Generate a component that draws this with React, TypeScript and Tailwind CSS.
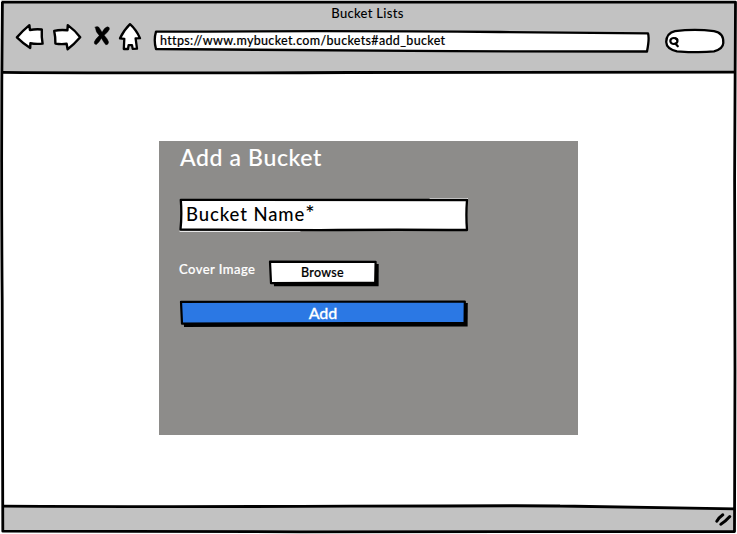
import type { ReactNode } from "react";

const ink = { fill: "none", stroke: "#000", strokeLinecap: "round", strokeLinejoin: "round" } as const;

function Sketch({ box, children }: { box: string; children: ReactNode }) {
  return (
    <svg viewBox={box} className="pointer-events-none absolute inset-0 h-full w-full" {...ink}>
      {children}
    </svg>
  );
}

function Toolbar() {
  return (
    <div className="flex h-[34px] items-start pl-[15px]">
      <svg viewBox="15 22 30 30" className="h-[30px] w-[30px]" {...ink} fill="#fff" strokeWidth="2.4">
        <path d="M16.9 37.4Q23 30.5 29.4 25.2L29.9 30Q36 28.8 41.8 29.5Q41.4 37 42.6 43.6Q36 44.2 30.4 43.3L30.2 48Q23 43.5 16.9 37.4Z" />
      </svg>
      <svg viewBox="52 22 30 30" className="ml-[7px] h-[30px] w-[30px]" {...ink} fill="#fff" strokeWidth="2.4">
        <path d="M54.2 30.9Q60 29.5 67.4 30.3L67.8 25.1Q75 30.3 80.2 37.3Q74 44.5 67.6 49.2L66.6 43.8Q61 44.5 55.4 43.6Q55.4 36 54.2 30.9Z" />
      </svg>
      <svg viewBox="92 22 20 30" className="ml-[10px] h-[30px] w-5" {...ink} fill="#000" strokeWidth="0.4">
        <path d="M95.2 27.2Q97.2 25.8 98.9 27.3L102.1 32.2Q104.3 27.8 107.2 26.8Q110 27 109.3 29.5Q107.8 32.5 104.2 35.3Q107.5 38.8 108.6 42Q108.4 44.9 105.8 44.8Q103.7 42.3 101.4 38.2Q99.3 42.3 96.4 44.5Q94.2 44.8 94.2 42Q95.6 39 99.2 35.6Q95.4 31.5 95.2 27.2Z" />
      </svg>
      <svg viewBox="118 22 25 30" className="ml-[6px] h-[30px] w-[25px]" {...ink} fill="#fff" strokeWidth="2.3">
        <path d="M130 24.2Q136 29.5 140 38.2L135.6 38.3L137 48.6L132.7 48.9L132 45.2L128.6 45.2L128 49L123.8 49L124.3 38.8L120 38.3Q124.2 29.8 130 24.2Z" />
      </svg>
      <div className="relative ml-[10px] mt-[7px] h-6 w-[499px]">
        <Sketch box="153 29 499 24">
          <path fill="#fff" strokeWidth="2.3" d="M156 31.7Q350 30.6 500 32L648 33.4Q649.6 38 647 51.5L450 51.2L156 49Q153.5 40 156 31.7Z" />
        </Sketch>
        <span className="relative block whitespace-nowrap pl-[7px] text-[12.5px] leading-[23px] tracking-[0.33px] [-webkit-text-stroke:0.15px]">
          https://www.mybucket.com/buckets#add_bucket
        </span>
      </div>
      <svg viewBox="664 27 63 28" className="ml-3 mt-[5px] h-7 w-[63px]" {...ink}>
        <path fill="#fff" strokeWidth="2.3" d="M675 31.1Q695 28.5 714 31.1Q724 33 723.3 43Q723 49 714 51.4Q700 53 677 51.3Q666.5 49 666.2 42Q666.5 33 675 31.1Z" />
        <ellipse cx="673.9" cy="41" rx="3.6" ry="3" strokeWidth="2.2" />
        <path strokeWidth="2.2" d="M675.6 38.3L677.2 39.5M675.3 43.5L677.8 46.3" />
      </svg>
    </div>
  );
}

function AddBucket() {
  return (
    <form className="flex h-[294px] w-[419px] flex-col items-start bg-[#8d8c8a] pl-5" onSubmit={(e) => e.preventDefault()}>
      <h1 className="h-[34px] whitespace-nowrap pl-px text-[23px] leading-[33px] tracking-[0.62px] text-white [-webkit-text-stroke:0.1px]">Add a Bucket</h1>
      <div className="relative mt-[23px] h-[34px] w-[290px]">
        <Sketch box="179 198 290 34">
          <path strokeWidth="1" stroke="#fff" d="M180 231.3H300M430 198.5H467.5" />
          <path fill="#fff" strokeWidth="2.3" d="M180.8 199.9L467 200Q465.8 215 467 230Q380 229.4 320 230.2L180.5 229.5Q182 215 180.8 199.9Z" />
        </Sketch>
        <label className="relative block whitespace-nowrap pl-[7px] text-[18.5px] leading-[32px] tracking-[0.9px]">
          Bucket Name<span className="text-[22px] leading-none">*</span>
        </label>
      </div>
      <div className="mt-[28px] flex h-[27px] items-start">
        <span className="w-[89px] whitespace-nowrap text-[13px] leading-[18px] tracking-[0.46px] text-white [-webkit-text-stroke:0.2px]">Cover Image</span>
        <button type="button" className="relative h-[27px] w-[111px]">
          <Sketch box="268 260 111 27">
            <path fill="#000" stroke="none" d="M273 264H378.7L378.6 286.3H274Z" />
            <path fill="#fff" strokeWidth="2.2" d="M270 261.6L375.6 261.8L375.2 282.6L271 283.2Z" />
          </Sketch>
          <span className="relative block h-[27px] pr-[2px] text-[12.5px] leading-[25px] tracking-[0.3px] [-webkit-text-stroke:0.2px]">Browse</span>
        </button>
      </div>
      <button type="submit" className="relative mt-[13px] h-[28px] w-[290px]">
        <Sketch box="179 300 290 28">
          <path fill="#000" stroke="none" d="M183 304L467.8 303L467.6 326.4L184 327Z" />
          <path fill="#2b78e4" strokeWidth="2.2" d="M181 301.8L464.8 301.6L464.6 322.9L182 323.6Z" />
        </Sketch>
        <span className="relative block h-[27px] pr-[2px] text-[16px] leading-[23px] text-white [-webkit-text-stroke:0.3px]">Add</span>
      </button>
    </form>
  );
}

export default function App() {
  return (
    <div className="relative flex h-[534px] w-[737px] flex-col overflow-hidden bg-white font-['Lato','Open_Sans',sans-serif] font-medium text-black">
      <header className="mx-[2px] mt-[2px] h-[71px] bg-[#c2c2c2]">
        <div className="-ml-[2px]">
          <div className="h-5 text-center text-[13px] leading-[23px] tracking-[0.3px]">Bucket Lists</div>
          <Toolbar />
        </div>
      </header>
      <main className="flex flex-1 items-start justify-center pt-[68px]">
        <AddBucket />
      </main>
      <footer className="mx-[2px] mb-[2px] flex h-[25px] items-center justify-end bg-[#c2c2c2] pr-[3px]">
        <svg viewBox="714 514 18 15" className="h-[15px] w-[18px]" {...ink} strokeWidth="3">
          <path d="M716.8 523.2Q719 519.5 722.8 516.8M720.8 526.2Q725.5 523.5 729.8 518.6" />
        </svg>
      </footer>
      <Sketch box="0 0 737 534">
        <path stroke="none" fill="#fff" d="M3 502L733 502L733 508L500 506.5L3 506Z" />
        <g strokeWidth="2.8" strokeLinecap="butt">
          <path d="M1.5 2.2Q300 1.6 735.5 2.2L734.6 180L735 370L734.5 531.6Q500 531 300 531.8L2.8 531.2L2.2 300Q1 150 2.4 2" />
          <path d="M2.5 72.3Q150 73.4 350 72.5T735 72.2M2.5 506.1Q150 507 350 506.2T560 506L735 508.8" />
        </g>
      </Sketch>
    </div>
  );
}
